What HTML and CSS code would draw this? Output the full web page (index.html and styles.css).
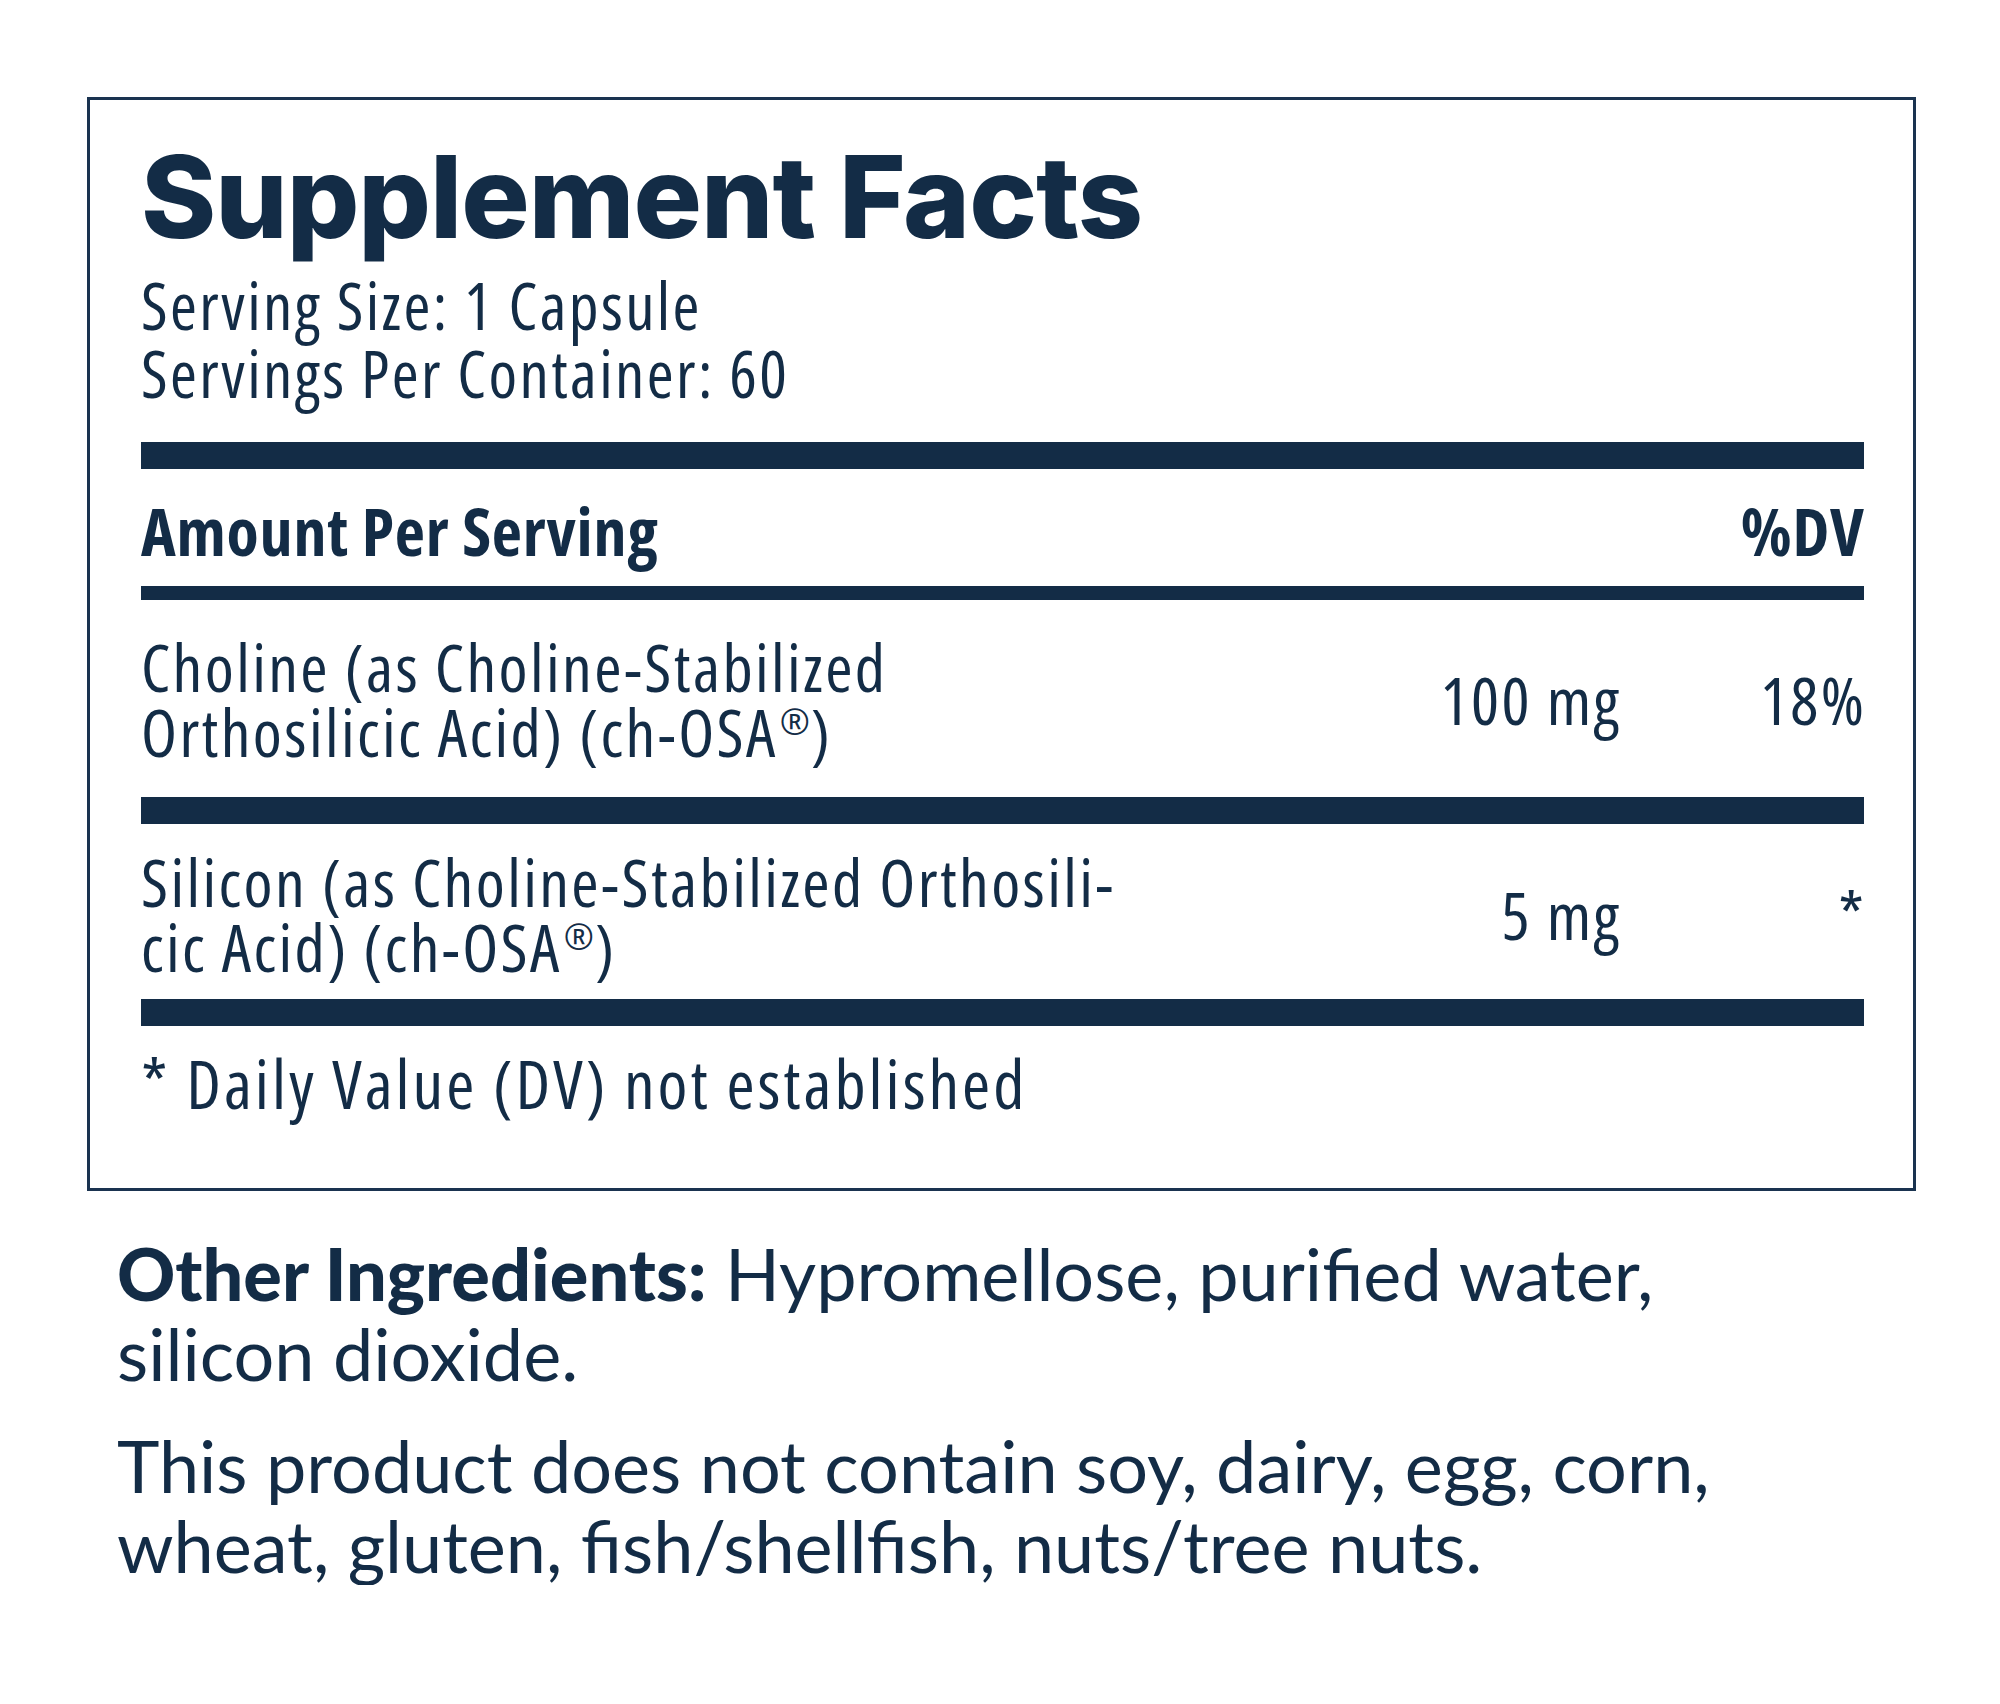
FILE: index.html
```html
<!DOCTYPE html>
<html lang="en">
<head>
<meta charset="utf-8">
<title>Supplement Facts</title>
<link rel="stylesheet" href="styles.css">
</head>
<body>
<div class="page">
  <section class="facts">
    <h1 class="title">Supplement Facts</h1>
    <div class="serving">
      <p>Serving Size: 1 Capsule</p>
      <p>Servings Per Container: 60</p>
    </div>
    <div class="bar thick"></div>
    <div class="row head">
      <span class="name">Amount Per Serving</span>
      <span class="dv">%DV</span>
    </div>
    <div class="bar thin"></div>
    <div class="row r1">
      <span class="name">Choline (as Choline-Stabilized Orthosilicic Acid) (ch-OSA<span class="reg">®</span>)</span>
      <span class="amt">100 mg</span>
      <span class="dv">18%</span>
    </div>
    <div class="bar thick"></div>
    <div class="row r2">
      <span class="name">Silicon (as Choline-Stabilized Orthosili&shy;cic Acid) (ch-OSA<span class="reg">®</span>)</span>
      <span class="amt">5 mg</span>
      <span class="dv">*</span>
    </div>
    <div class="bar thick"></div>
    <p class="foot">* Daily Value (DV) not established</p>
  </section>
  <div class="other">
    <p><strong>Other Ingredients:</strong> Hypromellose, purified water, silicon dioxide.</p>
    <p>This product does not contain soy, dairy, egg, corn, wheat, gluten, fish/shellfish, nuts/tree nuts.</p>
  </div>
</div>
</body>
</html>
```
FILE: styles.css
```css
html, body {
  margin: 0;
  background: #ffffff;
}
body {
  color: #132c46;
  font-family: "Open Sans", "Liberation Sans", sans-serif;
  font-stretch: condensed;
  font-weight: 450;
}
.page {
  padding: 97px 0 0 87px;
}
.facts {
  width: 1829px;
  box-sizing: border-box;
  border: 3px solid #1a3350;
  padding: 40px 49px 73px 51px;
}
.title {
  margin: 0;
  font-family: Inter, "Open Sans", sans-serif;
  font-stretch: normal;
  font-weight: 800;
  font-size: 114px;
  line-height: 114px;
  letter-spacing: -1px;
}
.serving {
  margin: 17px 0 35px;
  font-size: 65px;
  line-height: 68px;
  letter-spacing: 2.4px;
}
.serving p {
  margin: 0;
}
.bar {
  background: #132c46;
}
.thick {
  height: 27px;
}
.thin {
  height: 14px;
}
.row {
  display: grid;
  grid-template-columns: 975px 1fr 245px;
  align-items: center;
  font-size: 66px;
  line-height: 65px;
  letter-spacing: 2.4px;
}
.head {
  padding: 29px 0 23px;
  font-weight: 700;
  letter-spacing: 0.8px;
}
.head .dv {
  grid-column: 3;
}
.r1 {
  padding: 34px 0 33px;
}
.r2 {
  padding: 25px 0 20px;
}
.amt, .dv {
  text-align: right;
  margin-right: -2.4px;
}
.head .dv {
  margin-right: -0.8px;
}
.reg {
  display: inline-block;
  margin: 0 1px 0 2px;
  font-size: 0.55em;
  vertical-align: 0.6em;
  line-height: 1;
  letter-spacing: 0;
}
.foot {
  margin: 0;
  padding-top: 24px;
  font-size: 68px;
  line-height: 65px;
  letter-spacing: 3px;
}
.other {
  width: 1650px;
  margin: 42px 0 0 30px;
  font-family: Lato, "Open Sans", sans-serif;
  font-stretch: normal;
  font-weight: 400;
  font-size: 72px;
  line-height: 80px;
}
.other p {
  margin: 0;
}
.other p + p {
  margin-top: 32px;
}
.other strong {
  font-weight: 900;
}
```
